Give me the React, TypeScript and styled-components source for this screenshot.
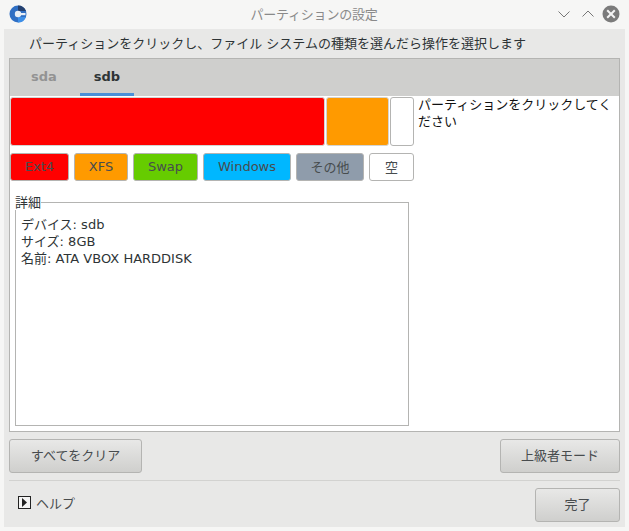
import { FC } from 'react'
import styled, { createGlobalStyle } from 'styled-components'

const GlobalStyle = createGlobalStyle`
  html, body {
    margin: 0;
    padding: 0;
    background: #f6f6f5;
    overflow: hidden;
  }
  * { box-sizing: border-box; }
`

const Window = styled.div`
  width: 629px;
  height: 531px;
  display: flex;
  flex-direction: column;
  padding: 0 4px 4px;
  background: #f6f6f5;
  color: #2e3436;
  font-family: "DejaVu Sans", "Noto Sans CJK JP", sans-serif;
  font-size: 13px;
`

const TitleBar = styled.div`
  height: 29px;
  flex: none;
  display: flex;
  align-items: center;
  justify-content: space-between;
  padding: 0 5px 1px 5px;
`

const Title = styled.span`
  flex: 1;
  text-align: center;
  color: #8a8a8a;
  font-size: 13px;
  padding: 0 0 2px 44px;
  letter-spacing: -0.2px;
`

const WindowButtons = styled.div`
  display: flex;
  align-items: center;
  gap: 10px;
`

const CloseIcon = styled.svg`
  margin-left: -3px;
`

const Body = styled.div`
  flex: 1;
  display: flex;
  flex-direction: column;
  min-height: 0;
  padding: 0 5px;
  background: #e8e8e7;
`

const Hint = styled.div`
  height: 29px;
  flex: none;
  padding: 0 0 3px 20px;
  display: flex;
  align-items: center;
  color: #2e3436;
`

const Notebook = styled.div`
  height: 374px;
  flex: none;
  display: flex;
  flex-direction: column;
  border: 1px solid #b4b4b2;
  background: #fff;
`

const TabBar = styled.div`
  height: 37px;
  flex: none;
  display: flex;
  padding-left: 7px;
  background: #cfcfcd;
`

const Tab = styled.div<{ $active?: boolean }>`
  width: 54px;
  margin-right: 9px;
  height: 37px;
  display: flex;
  align-items: center;
  justify-content: center;
  padding-top: 1px;
  font-weight: bold;
  font-size: 13px;
  color: ${p => (p.$active ? '#2e3436' : '#939393')};
  border-bottom: 3px solid ${p => (p.$active ? '#4a90d9' : 'transparent')};
`

const TabPage = styled.div`
  flex: 1;
  min-height: 0;
  display: flex;
  padding-top: 1px;
  gap: 4px;
`

const LeftColumn = styled.div`
  width: 404px;
  flex: none;
  display: flex;
  flex-direction: column;
`

const PartitionBar = styled.div`
  display: flex;
  gap: 1px;
  height: 49px;
`

const Partition = styled.div<{ $color: string; $width: number }>`
  width: ${p => p.$width}px;
  background: ${p => p.$color};
  border: 1px solid ${p => (p.$color === '#fff' ? '#b4b4b2' : '#d4d4d2')};
  border-radius: 3px;
`

const Message = styled.div`
  flex: 1;
  margin-top: -1px;
  line-height: 17px;
  color: #111;
  font-size: 13px;
`

const Legend = styled.div`
  display: flex;
  gap: 5px;
  margin-top: 7px;
  height: 28px;
`

const LegendItem = styled.div<{ $color: string; $width: number }>`
  width: ${p => p.$width}px;
  display: flex;
  align-items: center;
  justify-content: center;
  background: ${p => p.$color};
  border: 1px solid #b4b4b2;
  border-radius: 3px;
  color: #474c4e;
  font-size: 13px;
  padding-bottom: 2px;
`

const Details = styled.fieldset`
  margin: 14px 0 0 5px;
  padding: 6px 5px 0;
  width: 394px;
  height: 231px;
  border: 1px solid #b4b4b2;
  border-radius: 0;
  line-height: 17px;
  color: #2e3436;
`

const DetailsLabel = styled.legend`
  padding: 0;
  margin: -1px 0 0 -6px;
  line-height: 15px;
  font-size: 13px;
  color: #2e3436;
`

const ActionRow = styled.div`
  height: 34px;
  flex: none;
  margin-top: 7px;
  display: flex;
  justify-content: space-between;
`

const Button = styled.div<{ $width: number }>`
  width: ${p => p.$width}px;
  height: 34px;
  display: flex;
  align-items: center;
  justify-content: center;
  border: 1px solid #b4b4b2;
  border-radius: 3px;
  background: linear-gradient(to bottom, #e8e8e7, #cfcfcd);
  color: #484c4e;
  padding-bottom: 3px;
`

const Separator = styled.div`
  height: 1px;
  flex: none;
  margin-top: 7px;
  background: #d2d2d0;
`

const Footer = styled.div`
  flex: 1;
  display: flex;
  justify-content: space-between;
  align-items: flex-start;
  padding-top: 7px;
`

const Help = styled.div`
  display: flex;
  align-items: center;
  gap: 5px;
  height: 30px;
  padding: 0 0 2px 9px;
  color: #484c4e;
`

const Expander = styled.span`
  width: 13px;
  height: 13px;
  display: flex;
  align-items: center;
  justify-content: center;
  border: 1px solid #222;
  background: #f4f4f4;
`

const partitions = [
  { color: '#ff0000', width: 315 },
  { color: '#ff9a00', width: 63 },
  { color: '#fff', width: 24 }
]

const legend = [
  { label: 'Ext4', color: '#ff0000', width: 59 },
  { label: 'XFS', color: '#ff9a00', width: 54 },
  { label: 'Swap', color: '#66cc00', width: 65 },
  { label: 'Windows', color: '#00b7ff', width: 88 },
  { label: 'その他', color: '#8f9cab', width: 68 },
  { label: '空', color: '#fff', width: 45 }
]

const App: FC = () => (
  <Window>
    <GlobalStyle />
    <TitleBar>
      <svg width="18" height="18" viewBox="0 0 18 18">
        <circle cx="9" cy="9" r="8.5" fill="#2f6fc4" />
        <path d="M9 .5A8.5 8.5 0 0 1 17 6H9z" fill="#24406f" />
        <path d="M9 17.5A8.5 8.5 0 0 0 17 12H9z" fill="#3d8fe8" />
        <circle cx="9" cy="9" r="3.2" fill="#e8eef6" />
        <rect x="9" y="8" width="7.5" height="2.2" fill="#e8eef6" />
      </svg>
      <Title>パーティションの設定</Title>
      <WindowButtons>
        <svg width="14" height="14" viewBox="0 0 14 14">
          <path d="M1.5 4.5L7 10l5.5-5.5" fill="none" stroke="#777" strokeWidth="1" />
        </svg>
        <svg width="14" height="14" viewBox="0 0 14 14">
          <path d="M1.5 9.5L7 4l5.5 5.5" fill="none" stroke="#777" strokeWidth="1" />
        </svg>
        <CloseIcon width="18" height="18" viewBox="0 0 18 18">
          <circle cx="9" cy="9" r="8.5" fill="#7b7b7b" />
          <path d="M5.2 5.2l7.6 7.6M12.8 5.2l-7.6 7.6" stroke="#f4f4f4" strokeWidth="2" />
        </CloseIcon>
      </WindowButtons>
    </TitleBar>
    <Body>
      <Hint>パーティションをクリックし、ファイル システムの種類を選んだら操作を選択します</Hint>
      <Notebook>
        <TabBar>
          <Tab>sda</Tab>
          <Tab $active>sdb</Tab>
        </TabBar>
        <TabPage>
          <LeftColumn>
            <PartitionBar>
              {partitions.map(({ color, width }) => (
                <Partition key={color} $color={color} $width={width} />
              ))}
            </PartitionBar>
            <Legend>
              {legend.map(({ label, color, width }) => (
                <LegendItem key={label} $color={color} $width={width}>{label}</LegendItem>
              ))}
            </Legend>
            <Details>
              <DetailsLabel>詳細</DetailsLabel>
              <div>デバイス: sdb</div>
              <div>サイズ: 8GB</div>
              <div>名前: ATA VBOX HARDDISK</div>
            </Details>
          </LeftColumn>
          <Message>パーティションをクリックしてください</Message>
        </TabPage>
      </Notebook>
      <ActionRow>
        <Button $width={133}>すべてをクリア</Button>
        <Button $width={120}>上級者モード</Button>
      </ActionRow>
      <Separator />
      <Footer>
        <Help>
          <Expander>
            <svg width="7" height="9" viewBox="0 0 7 9">
              <path d="M1 0l5 4.5L1 9z" fill="#222" />
            </svg>
          </Expander>
          ヘルプ
        </Help>
        <Button $width={85}>完了</Button>
      </Footer>
    </Body>
  </Window>
)

export default App
